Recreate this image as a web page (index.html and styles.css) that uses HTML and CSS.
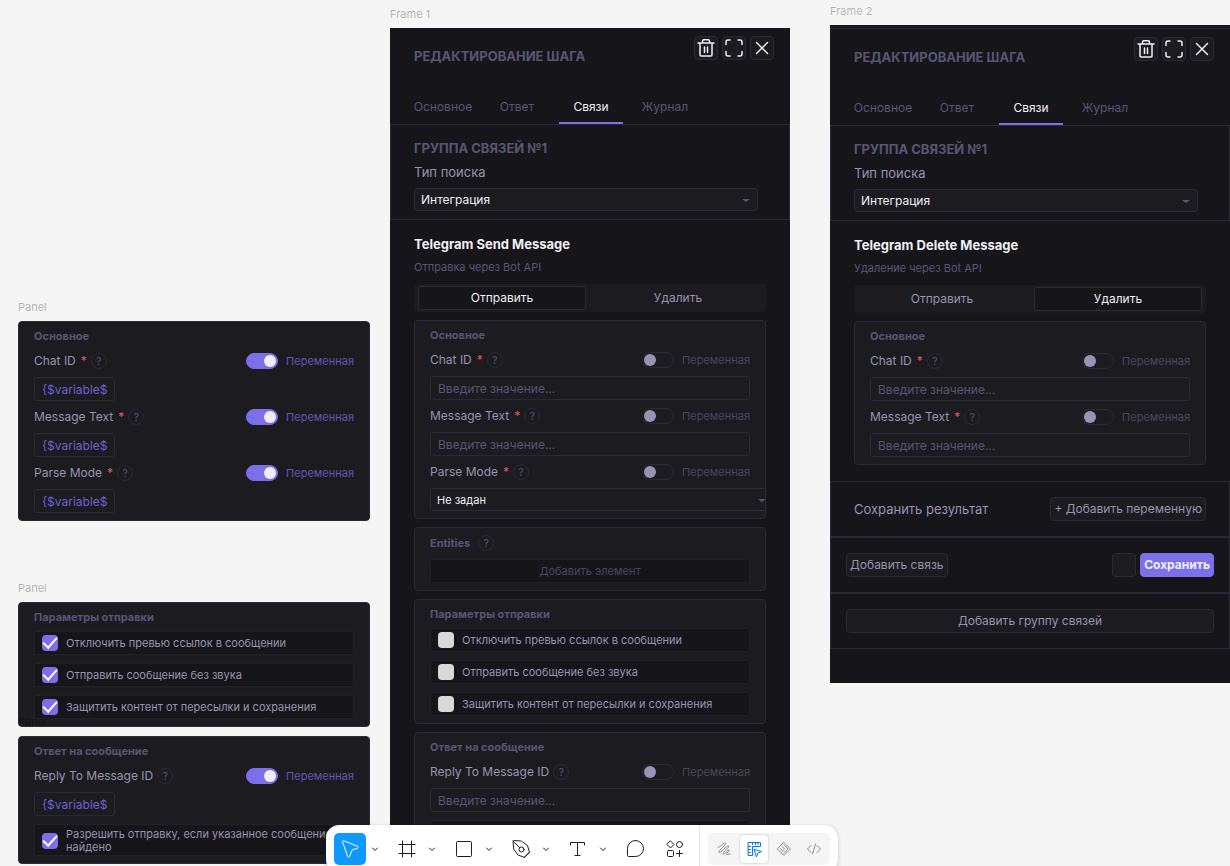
FILE: index.html
```html
<!DOCTYPE html>
<html lang="ru">
<head>
<meta charset="utf-8">
<title>Редактирование шага</title>
<link rel="stylesheet" href="styles.css">
</head>
<body>
<svg class="sprite" aria-hidden="true">
  <symbol id="trash" viewBox="0 0 22 22"><path d="M3 6h16M5 6v12q0 1 1 1h10q1 0 1-1V6M7.500 6V4q0-1.200 1.200-1.200h4.600q1.200 0 1.200 1.200v2M9.500 10v5.500M12.500 10v5.500"/></symbol>
  <symbol id="expand" viewBox="0 0 22 22"><path d="M3 7.500V5q0-2 2-2h2M15 3h2q2 0 2 2v2.500M19 14.500V17q0 2-2 2h-2M7 19H5q-2 0-2-2v-2.500"/></symbol>
  <symbol id="close" viewBox="0 0 22 22"><path d="M5.500 5.500l11 11M16.500 5.500l-11 11"/></symbol>
  <symbol id="caret" viewBox="0 0 8 8"><path d="M1.500 3L4 5.500 6.500 3"/></symbol>
</svg>
<main class="canvas">

  <section class="node node-main">
    <div class="node-label">Panel</div>
    <div class="panel">
      <h3 class="panel-title">Основное</h3>
      <div class="field">
        <div class="field-head"><label for="a1">Chat ID</label><span class="req">*</span><button class="help">?</button>
          <label class="toggle"><input type="checkbox" checked>Переменная</label></div>
        <input class="chip" id="a1" value="{$variable$">
      </div>
      <div class="field">
        <div class="field-head"><label for="a2">Message Text</label><span class="req">*</span><button class="help">?</button>
          <label class="toggle"><input type="checkbox" checked>Переменная</label></div>
        <input class="chip" id="a2" value="{$variable$">
      </div>
      <div class="field">
        <div class="field-head"><label for="a3">Parse Mode</label><span class="req">*</span><button class="help">?</button>
          <label class="toggle"><input type="checkbox" checked>Переменная</label></div>
        <input class="chip" id="a3" value="{$variable$">
      </div>
    </div>
  </section>

  <section class="node node-params">
    <div class="node-label">Panel</div>
    <div class="panel">
      <h3 class="panel-title tall">Параметры отправки</h3>
      <div class="checks">
        <label class="check"><input type="checkbox" checked>Отключить превью ссылок в сообщении</label>
        <label class="check"><input type="checkbox" checked>Отправить сообщение без звука</label>
        <label class="check"><input type="checkbox" checked>Защитить контент от пересылки и сохранения</label>
      </div>
    </div>
  </section>

  <section class="node node-reply">
    <div class="node-label">Panel</div>
    <div class="panel">
      <h3 class="panel-title">Ответ на сообщение</h3>
      <div class="field">
        <div class="field-head"><label for="a4">Reply To Message ID</label><button class="help">?</button>
          <label class="toggle"><input type="checkbox" checked>Переменная</label></div>
        <input class="chip" id="a4" value="{$variable$">
      </div>
      <label class="check after-field"><input type="checkbox" checked>Разрешить отправку, если указанное сообщение не найдено</label>
    </div>
  </section>

  <section class="node frame-one">
    <div class="node-label">Frame 1</div>
    <div class="frame">
      <header class="head">
        <div class="head-row">
          <h1 class="caps">РЕДАКТИРОВАНИЕ ШАГА</h1>
          <div class="actions">
            <button class="icon-btn" aria-label="Удалить"><svg><use href="#trash"/></svg></button>
            <button class="icon-btn" aria-label="Развернуть"><svg><use href="#expand"/></svg></button>
            <button class="icon-btn" aria-label="Закрыть"><svg><use href="#close"/></svg></button>
          </div>
        </div>
        <nav class="tabs">
          <button class="tab">Основное</button><button class="tab">Ответ</button><button class="tab active">Связи</button><button class="tab">Журнал</button>
        </nav>
      </header>
      <section class="group">
        <h2 class="caps">ГРУППА СВЯЗЕЙ №1</h2>
        <label class="group-label" for="s1">Тип поиска</label>
        <div class="select"><select id="s1"><option>Интеграция</option></select></div>
      </section>
      <section class="body">
        <h2 class="title">Telegram Send Message</h2>
        <p class="sub">Отправка через Bot API</p>
        <div class="segments"><button class="seg active">Отправить</button><button class="seg">Удалить</button></div>
        <div class="panel">
          <h3 class="panel-title">Основное</h3>
          <div class="field">
            <div class="field-head"><label for="b1">Chat ID</label><span class="req">*</span><button class="help">?</button>
              <label class="toggle"><input type="checkbox">Переменная</label></div>
            <input class="text" id="b1" placeholder="Введите значение...">
          </div>
          <div class="field">
            <div class="field-head"><label for="b2">Message Text</label><span class="req">*</span><button class="help">?</button>
              <label class="toggle"><input type="checkbox">Переменная</label></div>
            <input class="text" id="b2" placeholder="Введите значение...">
          </div>
          <div class="field">
            <div class="field-head"><label for="b3">Parse Mode</label><span class="req">*</span><button class="help">?</button>
              <label class="toggle"><input type="checkbox">Переменная</label></div>
            <div class="select small"><select id="b3"><option>Не задан</option></select></div>
          </div>
        </div>
        <div class="panel entities">
          <div class="panel-row"><h3 class="panel-title">Entities</h3><button class="help">?</button></div>
          <button class="add-item">Добавить элемент</button>
        </div>
        <div class="panel">
          <h3 class="panel-title tall">Параметры отправки</h3>
          <div class="checks">
            <label class="check"><input type="checkbox">Отключить превью ссылок в сообщении</label>
            <label class="check"><input type="checkbox">Отправить сообщение без звука</label>
            <label class="check"><input type="checkbox">Защитить контент от пересылки и сохранения</label>
          </div>
        </div>
        <div class="panel">
          <h3 class="panel-title">Ответ на сообщение</h3>
          <div class="field">
            <div class="field-head"><label for="b4">Reply To Message ID</label><button class="help">?</button>
              <label class="toggle"><input type="checkbox">Переменная</label></div>
            <input class="text" id="b4" placeholder="Введите значение...">
          </div>
          <label class="check after-field"><input type="checkbox">Разрешить отправку, если указанное сообщение не найдено</label>
        </div>
      </section>
    </div>
  </section>

  <section class="node frame-two">
    <div class="node-label">Frame 2</div>
    <div class="frame">
      <header class="head">
        <div class="head-row">
          <h1 class="caps">РЕДАКТИРОВАНИЕ ШАГА</h1>
          <div class="actions">
            <button class="icon-btn" aria-label="Удалить"><svg><use href="#trash"/></svg></button>
            <button class="icon-btn" aria-label="Развернуть"><svg><use href="#expand"/></svg></button>
            <button class="icon-btn" aria-label="Закрыть"><svg><use href="#close"/></svg></button>
          </div>
        </div>
        <nav class="tabs">
          <button class="tab">Основное</button><button class="tab">Ответ</button><button class="tab active">Связи</button><button class="tab">Журнал</button>
        </nav>
      </header>
      <section class="group">
        <h2 class="caps">ГРУППА СВЯЗЕЙ №1</h2>
        <label class="group-label" for="s2">Тип поиска</label>
        <div class="select"><select id="s2"><option>Интеграция</option></select></div>
      </section>
      <section class="body">
        <h2 class="title">Telegram Delete Message</h2>
        <p class="sub">Удаление через Bot API</p>
        <div class="segments"><button class="seg">Отправить</button><button class="seg active">Удалить</button></div>
        <div class="panel">
          <h3 class="panel-title">Основное</h3>
          <div class="field">
            <div class="field-head"><label for="c1">Chat ID</label><span class="req">*</span><button class="help">?</button>
              <label class="toggle"><input type="checkbox">Переменная</label></div>
            <input class="text" id="c1" placeholder="Введите значение...">
          </div>
          <div class="field">
            <div class="field-head"><label for="c2">Message Text</label><span class="req">*</span><button class="help">?</button>
              <label class="toggle"><input type="checkbox">Переменная</label></div>
            <input class="text" id="c2" placeholder="Введите значение...">
          </div>
        </div>
      </section>
      <section class="bar result"><span class="result-label">Сохранить результат</span><button class="btn">+ Добавить переменную</button></section>
      <section class="bar"><button class="btn">Добавить связь</button><div class="bar-end"><button class="btn square" aria-label="Дополнительно"></button><button class="btn primary">Сохранить</button></div></section>
      <section class="bar"><button class="btn wide">Добавить группу связей</button></section>
    </div>
  </section>

  <nav class="toolbar">
    <div class="tool"><button class="tool-btn selected" aria-label="Move"><svg viewBox="0 0 32 32"><path d="M8.500 8.800c-.3-.8.3-1.400 1.100-1.100l14 5.600c.9.400.9 1.500 0 1.800l-5.500 2-2.600 6.400c-.4.900-1.500.9-1.800 0z"/></svg></button><button class="more" aria-label="Move tools"><svg><use href="#caret"/></svg></button></div>
    <div class="tool"><button class="tool-btn" aria-label="Frame"><svg viewBox="0 0 32 32"><path d="M11.500 8v16M20.500 8v16M8 11.500h16M8 20.500h16"/></svg></button><button class="more" aria-label="Region tools"><svg><use href="#caret"/></svg></button></div>
    <div class="tool"><button class="tool-btn" aria-label="Rectangle"><svg viewBox="0 0 32 32"><rect x="8.500" y="8.500" width="15" height="15" rx="1"/></svg></button><button class="more" aria-label="Shape tools"><svg><use href="#caret"/></svg></button></div>
    <div class="tool"><button class="tool-btn" aria-label="Pen"><svg viewBox="0 0 32 32"><path d="M8 8.500q0-1 1-1l6.500.5q1 0 1.800.7l5.200 3.800 2 7-5 5-6.500-2.500-4-5.500zM8 8l6.700 6.700M19 24.500l5.500-5.500"/><circle cx="16.500" cy="16.500" r="2.500"/></svg></button><button class="more" aria-label="Drawing tools"><svg><use href="#caret"/></svg></button></div>
    <div class="tool"><button class="tool-btn" aria-label="Text"><svg viewBox="0 0 32 32"><path d="M8.500 12V9.500h14V12M15.500 9.500v13M13 22.500h5"/></svg></button><button class="more" aria-label="Text tools"><svg><use href="#caret"/></svg></button></div>
    <button class="tool-btn" aria-label="Comment"><svg viewBox="0 0 32 32"><path d="M16.500 7.500a8 8 0 1 1 0 16h-7c-.6 0-1-.4-1-1v-7a8 8 0 0 1 8-8z"/></svg></button>
    <button class="tool-btn" aria-label="Actions"><svg viewBox="0 0 32 32"><path d="M11.500 8l3.500 3.500-3.500 3.500L8 11.500zM20.500 17.500v6M17.500 20.500h6"/><circle cx="20.500" cy="11.500" r="3"/><rect x="8.500" y="17.500" width="6" height="6" rx="1"/></svg></button>
    <div class="modes">
      <button class="mode" aria-label="Draw"><svg viewBox="0 0 28 28"><path d="M8 12.500C10.500 12 13.500 7.500 15.300 8 17.500 9 8 15.500 9 17.500c1.500 1.500 7.500-7.500 9.500-6.500 1.500 1.500-6.500 6-5.200 8 1.200 1 4.500-5 6-4 1 1-3.500 3-2.600 4.300.7.800 2-.3 3.300-.3"/></svg></button>
      <button class="mode on" aria-label="Design"><svg viewBox="0 0 28 28"><path d="M8.500 7.500h12v4h-8v9h-4zM12.500 7.500v2M15.500 7.500v2M18 7.500v2M8.500 11.500h2M8.500 14.500h2M8.500 17.500h2M14.500 14.500l7 2-3.500 1.500-1.500 3.500z"/></svg></button>
      <button class="mode" aria-label="Dev"><svg viewBox="0 0 28 28"><path d="M14 7.500l6.500 6.500-6.500 6.500L7.500 14zM10.500 13.500L12.500 16M12 11.500l2.500 2.500-2 2M14 10l4 4-4 4"/></svg></button>
      <button class="mode" aria-label="Code"><svg viewBox="0 0 28 28"><path d="M11 10.500L7.500 14l3.500 3.500M17 10.500l3.500 3.500-3.500 3.500M15.500 9l-3 10"/></svg></button>
    </div>
  </nav>
</main>
</body>
</html>
```
FILE: styles.css
```css
:root {
  --bg: #16151a;
  --panel: #1c1b20;
  --line: #2b2935;
  --dim: #5a5573;
  --text: #9893ae;
  --bright: #f0eff6;
  --accent: #7d6eea;
}
* { box-sizing: border-box; }
body { margin: 0; font-family: Inter, "Noto Sans", sans-serif; font-size: 12px; line-height: 16px; color: var(--text); }
button, input, select { font: inherit; color: inherit; }
button { background: none; border: 0; padding: 0; }
h1, h2, h3, p { margin: 0; font-size: inherit; font-weight: inherit; }
svg { fill: none; stroke: currentColor; stroke-linecap: round; stroke-linejoin: round; display: block; }
.sprite { position: absolute; width: 0; height: 0; }

.canvas { position: relative; height: 100vh; overflow: hidden; background: #f5f5f5; }

/* Nodes placed freely on the canvas */
.node { position: absolute; }
.node-label { height: 22px; font-size: 11px; color: rgba(0, 0, 0, .3); position: relative; z-index: 1; }
.node-main { left: 18px; top: 299px; width: 352px; }
.node-params { left: 18px; top: 580px; width: 352px; }
.node-reply { left: 18px; top: 714px; width: 352px; }
.frame-one { left: 390px; top: 6px; width: 400px; }
.frame-two { left: 830px; top: 3px; width: 400px; }

.frame { background: var(--bg); }
.frame-two .frame { padding: 3px 0 34px; }
.frame-two .head { border-top: 1px solid var(--line); }

.head-row { display: flex; justify-content: space-between; padding: 8px 16px 0 24px; height: 64px; }
.caps { font-size: 13px; font-weight: 700; color: var(--dim); }
.head-row .caps { padding-top: 12px; }
.actions { display: flex; gap: 4px; }
.icon-btn { width: 24px; height: 24px; border: 1px solid var(--line); border-radius: 4px; background: var(--panel); color: #f0eff6; display: grid; place-items: center; }
.icon-btn svg { width: 22px; height: 22px; stroke-width: 1.5; }
.tabs { display: grid; grid-template-columns: repeat(4, 64px); gap: 10px; padding-left: 21px; height: 32px; }
.tab { color: var(--dim); border-bottom: 2px solid transparent; }
.tab.active { color: var(--bright); border-color: var(--accent); }

.group { border: 1px solid var(--line); padding: 15px 31px 8px 23px; display: flex; flex-direction: column; gap: 8px; }
.group-label { font-size: 13px; }
.select { position: relative; height: 23px; }
.select select { appearance: none; width: 100%; height: 100%; padding: 0 24px 0 6px; border: 1px solid var(--line); border-radius: 3px; background: var(--panel); color: var(--bright); }
.select::after { content: ""; position: absolute; right: 8px; top: 11px; border: 4px solid transparent; border-top: 3px solid var(--dim); border-bottom: 0; }
.select.small { width: 344px; font-size: 11px; }

.body { padding: 16px 24px; display: flex; flex-direction: column; gap: 8px; }
.title { font-size: 13px; font-weight: 700; color: var(--bright); }
.sub { font-size: 11px; line-height: 14px; padding-bottom: 2px; color: var(--dim); }
.segments { display: grid; grid-template-columns: 1fr 1fr; gap: 8px; height: 28px; padding: 2px 4px; border-radius: 4px; background: var(--panel); }
.seg { border: 1px solid transparent; border-radius: 3px; }
.seg.active { background: var(--bg); border-color: var(--line); color: var(--bright); }

.panel { background: var(--panel); border: 1px solid var(--line); border-radius: 4px; padding: 7px 15px; overflow: hidden; display: flex; flex-direction: column; gap: 4px; }
.panel-title { height: 16px; font-size: 11px; line-height: 14px; font-weight: 700; color: var(--dim); }
.panel-title.tall { height: 17px; }
.field { display: flex; flex-direction: column; gap: 4px; }
.field-head { display: flex; align-items: center; height: 24px; }
.req { color: #e5575f; margin-left: 5px; }
.help { width: 16px; height: 16px; margin-left: 4px; border: 1px solid var(--line); border-radius: 50%; font-size: 10px; line-height: 14px; color: var(--dim); }
.toggle { margin-left: auto; display: flex; align-items: center; gap: 8px; font-size: 11px; color: #4a465c; }
.toggle input { appearance: none; margin: 0; width: 32px; height: 16px; border: 1px solid var(--line); border-radius: 8px; display: flex; align-items: center; padding: 0 1px; }
.toggle input::before { content: ""; width: 12px; height: 12px; border-radius: 50%; background: #9b93b5; }
.toggle input:checked { background: var(--accent); border-color: var(--accent); justify-content: flex-end; }
.toggle input:checked::before { background: #eeecf6; }
.toggle:has(:checked) { color: #6255b4; }
.text, .chip { height: 24px; border: 1px solid var(--line); border-radius: 3px; background: var(--panel); padding: 0 7px; }
.text { width: 100%; }
.text::placeholder { color: var(--dim); opacity: 1; }
.chip { width: 81px; color: #6f62cc; }

.entities { gap: 8px; }
.panel-row { display: flex; align-items: center; gap: 4px; }
.panel-row .panel-title { line-height: 16px; }
.add-item { height: 24px; border: 1px solid #201f26; border-radius: 3px; background: var(--bg); font-size: 11px; color: #4a465c; }

.checks { display: flex; flex-direction: column; gap: 8px; }
.check { display: flex; align-items: center; gap: 8px; min-height: 24px; padding: 2px 0 2px 7px; border: 1px solid #222129; border-radius: 2px; background: var(--bg); font-size: 11px; line-height: 13px; }
.check input { appearance: none; flex: none; width: 16px; height: 16px; margin: 0; border-radius: 4px; background: #d9d9d9; display: grid; place-items: center; }
.check input:checked { background: var(--accent); }
.check input:checked::before { content: ""; width: 6px; height: 12px; border: solid #fff; border-width: 0 2px 2px 0; transform: translateY(-2px) rotate(42deg); }
.after-field { margin-top: 4px; padding-top: 3px; padding-bottom: 1px; }

.bar { display: flex; align-items: center; justify-content: space-between; border: 1px solid var(--line); padding: 15px; }
.bar.result { padding: 15px 23px; }
.result-label { font-size: 13px; }
.bar-end { display: flex; gap: 4px; }
.btn { height: 24px; padding: 0 3px; border: 1px solid var(--line); border-radius: 4px; background: var(--panel); }
.btn.square { width: 24px; }
.btn.primary { background: var(--accent); border-color: var(--accent); color: var(--bright); font-weight: 700; }
.btn.wide { flex: 1; }

/* Floating toolbar */
.toolbar { position: absolute; left: 326px; top: 825px; z-index: 2; display: flex; gap: 8px; padding: 8px; border-radius: 13px; background: #fff; box-shadow: 0 0 1px rgba(0, 0, 0, .3), 0 2px 5px rgba(0, 0, 0, .15); color: #1e1e1e; }
.tool { display: flex; }
.tool-btn { width: 32px; height: 32px; border-radius: 5px; }
.tool-btn svg { width: 32px; height: 32px; stroke-width: 1; }
.tool-btn.selected { background: #0d99ff; color: #fff; }
.more { width: 17px; display: grid; place-items: center; }
.more svg { width: 8px; height: 8px; }
.modes { position: relative; display: flex; gap: 2px; margin-left: 9px; padding: 2px; border-radius: 5px; background: #f5f5f5; color: #8a8a8a; }
.modes::before { content: ""; position: absolute; left: -9px; top: -8px; width: 1px; height: 48px; background: #e6e6e6; }
.mode { width: 28px; height: 28px; border-radius: 4px; }
.mode svg { width: 28px; height: 28px; }
.mode.on { background: #fff; color: #007be5; box-shadow: 0 0 2px rgba(0, 0, 0, .3); }
```
